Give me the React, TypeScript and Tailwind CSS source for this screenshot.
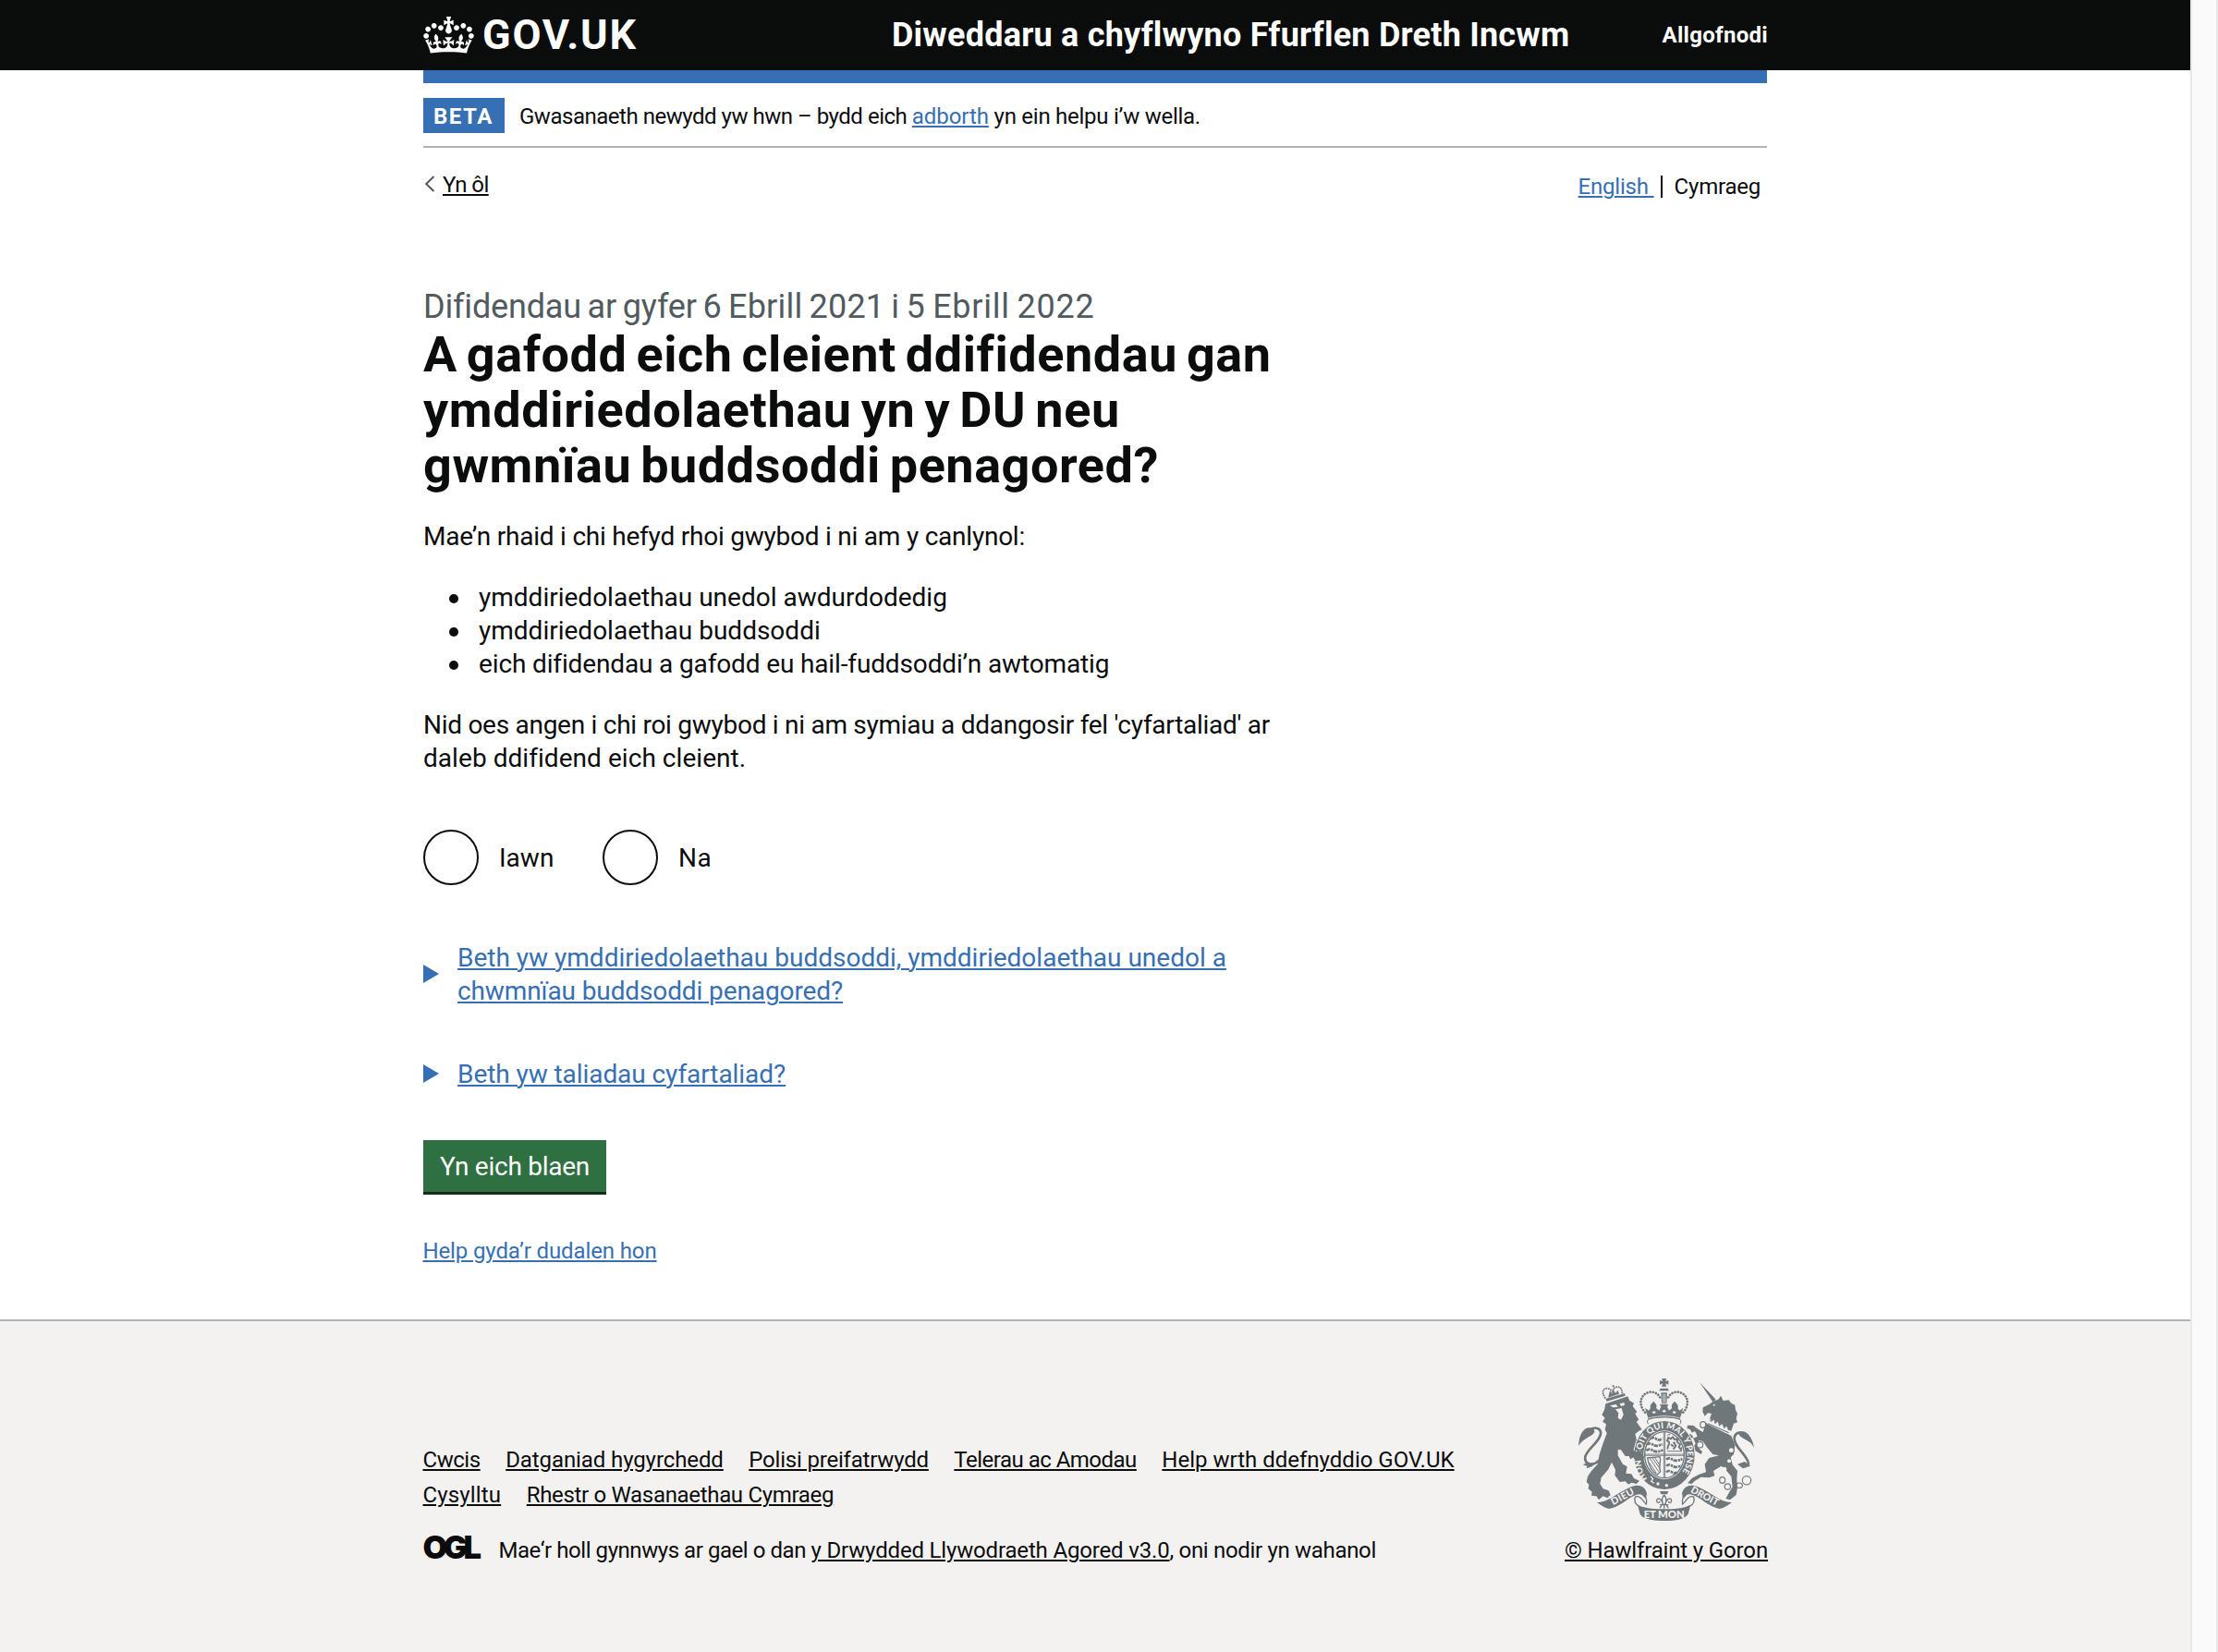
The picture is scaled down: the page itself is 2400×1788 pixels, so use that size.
import type { ReactNode } from "react";

const footerRowOne = [
  { label: "Cwcis", cls: "tracking-[-0.45px]" },
  { label: "Datganiad hygyrchedd", cls: "tracking-[-0.1px]" },
  { label: "Polisi preifatrwydd", cls: "tracking-[-0.2px]" },
  { label: "Telerau ac Amodau", cls: "tracking-[-0.51px]" },
  { label: "Help wrth ddefnyddio GOV.UK", cls: "" },
];

const footerRowTwo = [
  { label: "Cysylltu", cls: "tracking-[0.15px]" },
  { label: "Rhestr o Wasanaethau Cymraeg", cls: "tracking-[-0.32px]" },
];

const bullets = [
  { label: "ymddiriedolaethau unedol awdurdodedig", cls: "" },
  { label: "ymddiriedolaethau buddsoddi", cls: "" },
  { label: "eich difidendau a gafodd eu hail-fuddsoddi’n awtomatig", cls: "tracking-[-0.14px]" },
];

function Link({ children, className = "" }: { children: ReactNode; className?: string }) {
  return (
    <a href="#" className={`underline decoration-2 underline-offset-2 ${className}`}>
      {children}
    </a>
  );
}

function Crown() {
  return (
    <svg viewBox="0 0 132 97" className="h-[40px] w-[55px] shrink-0" fill="currentColor" aria-hidden="true">
      <path d="M25 30.2c3.5 1.5 7.7-.2 9.1-3.7 1.5-3.6-.2-7.8-3.9-9.2-3.6-1.4-7.6.3-9.1 3.9-1.4 3.5.3 7.5 3.9 9zM9 39.5c3.6 1.5 7.8-.2 9.2-3.7 1.5-3.6-.2-7.8-3.9-9.1-3.6-1.5-7.6.2-9.1 3.8-1.4 3.5.3 7.5 3.8 9zM4.4 57.2c3.5 1.5 7.7-.2 9.1-3.8 1.5-3.6-.2-7.7-3.9-9.1-3.5-1.5-7.6.3-9.1 3.8-1.4 3.5.3 7.6 3.9 9.1zm38.3-21.4c3.5 1.5 7.7-.2 9.1-3.8 1.5-3.6-.2-7.7-3.9-9.1-3.6-1.5-7.6.3-9.1 3.8-1.3 3.6.4 7.7 3.9 9.1zm64.4-5.6c-3.6 1.5-7.8-.2-9.1-3.7-1.5-3.6.2-7.8 3.8-9.2 3.6-1.4 7.7.3 9.2 3.9 1.3 3.5-.4 7.5-3.9 9zm15.9 9.3c-3.6 1.5-7.7-.2-9.1-3.7-1.5-3.6.2-7.8 3.7-9.1 3.6-1.5 7.7.2 9.2 3.8 1.5 3.5-.3 7.5-3.8 9zm4.7 17.7c-3.6 1.5-7.8-.2-9.2-3.8-1.5-3.6.2-7.7 3.9-9.1 3.6-1.5 7.7.3 9.2 3.8 1.3 3.5-.4 7.6-3.9 9.1zM89.3 35.8c-3.6 1.5-7.8-.2-9.2-3.8-1.4-3.6.2-7.7 3.9-9.1 3.6-1.5 7.7.3 9.2 3.8 1.4 3.6-.3 7.7-3.9 9.1zM69.7 17.7l8.9 4.7V9.3l-8.9 2.8c-.2-.3-.5-.6-.9-.9L72.4 0H59.6l3.5 11.2c-.3.3-.6.5-.9.9l-8.8-2.8v13.1l8.8-4.7c.3.3.6.7.9.9l-5 15.4v.1c-.2.8-.4 1.6-.4 2.4 0 4.1 3.1 7.5 7 8.1h.2c.3 0 .7.1 1 .1.4 0 .7 0 1-.1h.2c4-.6 7.1-4.1 7.1-8.1 0-.8-.1-1.7-.4-2.4V34l-5.1-15.4c.4-.2.7-.6 1-.9zM66 92.8c16.9 0 32.8 1.1 47.1 3.2 4-16.9 8.9-26.7 14-33.5l-9.6-3.4c1 4.9 1.1 7.2 0 10.2-1.5-1.4-3-4.3-4.2-8.7L108.6 76c2.8-2 5-3.2 7.5-3.3-4.4 9.4-10 11.9-13.6 11.2-4.3-.8-6.3-4.6-5.6-7.9 1-4.7 5.7-5.9 8-.5 4.3-8.7-3-11.4-7.6-8.8 7.1-7.2 7.9-13.5 2.1-21.1-8 6.1-8.1 12.3-4.5 20.8-4.7-5.4-12.1-2.5-9.5 6.2 3.4-5.2 7.9-2 7.2 3.1-.6 4.3-6.4 7.8-13.5 7.2-10.3-.9-10.9-8-11.2-13.8 2.5-.5 7.1 1.8 11 7.3L80.2 60c-4.1 4.4-8 5.3-12.3 5.4 1.4-4.4 8-11.6 8-11.6H55.5s6.4 7.2 7.9 11.6c-4.2-.1-8-1-12.3-5.4l1.4 16.4c3.9-5.5 8.5-7.7 10.9-7.3-.3 5.8-.9 12.8-11.1 13.8-7.2.6-12.9-2.9-13.5-7.2-.7-5 3.8-8.3 7.1-3.1 2.7-8.7-4.6-11.6-9.4-6.2 3.7-8.5 3.6-14.7-4.6-20.8-5.8 7.6-5 13.9 2.2 21.1-4.7-2.6-11.9.1-7.7 8.8 2.3-5.5 7.1-4.2 8.1.5.7 3.3-1.3 7.1-5.7 7.9-3.5.7-9-1.8-13.5-11.2 2.5.1 4.7 1.3 7.5 3.3l-4.7-15.4c-1.2 4.4-2.7 7.2-4.3 8.7-1.1-3-.9-5.3 0-10.2l-9.5 3.4c5 6.9 9.9 16.7 14 33.5 14.8-2.1 30.8-3.2 47.7-3.2z" />
    </svg>
  );
}

function RoyalArms() {
  const ink = "#6f777b";
  const paper = "#f3f2f1";
  return (
    <svg viewBox="84 66 570 462" className="h-[154px] w-[190px]" fill={ink} aria-hidden="true">
      {/* lion's tail and body */}
      <path d="M150 332C132 352 102 346 106 320C112 294 152 274 156 246C158 226 138 222 122 232" fill="none" stroke={ink} strokeWidth="8" />
      <path d="M84 284C86 262 90 240 108 228C120 222 138 228 136 240C130 254 104 256 84 284zM112 340L98 346L112 350L110 358L132 350z" />
      <path d="M172 148L244 124L250 138L264 146L260 156L274 174L268 180L280 200L272 206L290 232L280 236L268 246L272 262L276 280L292 300L290 304L298 322L288 334L278 326L270 336L264 322L252 328L248 318L236 318L222 298L212 296L212 316L228 344L242 352L238 374L256 376L264 390L282 398L272 408L256 404L246 410L236 400L218 402L202 380L204 362L192 338L180 362L158 388L154 408L164 424L182 430L188 444L178 454L164 448L150 460L142 448L126 446L128 434L116 424L118 410L110 402L114 384L126 366L146 344L152 312L164 276L176 244L170 232L174 214L162 206L170 194L160 184L168 168z" />
      <path d="M186 154L206 150L212 158L196 160zM218 148L232 144L234 152L222 156zM204 166L224 162L230 184L222 200L212 194L214 178z" fill={paper} />
      <path d="M176 140L236 122L234 114L172 132z" />
      <path d="M170 128C158 110 164 98 176 98C186 98 192 106 196 112M226 112C224 94 216 92 206 94C198 96 194 104 196 112" fill="none" stroke={ink} strokeWidth="6" strokeDasharray="0.1 7.4" strokeLinecap="round" />
      <path d="M194 88h6v6h-6zM186 106l8 10 4-14 6 12 8-10 4 12-36 12z" />

      {/* unicorn's tail and body */}
      <path d="M636 346C638 318 588 290 590 260C592 238 616 236 630 252" fill="none" stroke={ink} strokeWidth="8" />
      <path d="M654 290C650 268 640 244 620 238C608 236 602 240 606 250C618 266 640 264 654 290zM624 336L642 350L618 358L600 344z" />
      <path d="M477 78L530 134L520 142z" />
      <path d="M487 174L488 160L512 148L520 140L538 134L546 122L554 138L572 136L580 146L592 152L594 168L600 180L596 196L600 208L588 212L580 236L544 224L508 202L516 180L504 178L494 188z" />
      <circle cx="524" cy="152" r="3" fill={paper} />
      <path d="M498 210L544 234L580 252L592 282L588 312L578 322L584 346L600 366L598 394L600 420L596 444L576 460L562 456L574 434L584 418L580 384L562 362L548 350L522 366L526 382L508 388L482 386L462 398L452 408L438 406L452 390L474 378L498 370L494 344L508 324L540 316L520 312L500 288L488 270L474 266L474 292L486 304L482 312L462 300L456 292L464 276L456 260L470 254L464 240L450 232L436 228L438 218L456 218L474 232L488 240z" />
      <path d="M506 202l6-6 4 10 8-6 4 12 8-6 6 14 8-6 6 12 10-4 4 14-6 8-62-30z" fill={paper} />
      <path d="M504 212L572 242M512 200l2 6M526 206l2 6M540 214l2 6M556 222l2 6" stroke={ink} strokeWidth="3.5" fill="none" />
      <path d="M446 222L456 240M454 258L444 248" stroke={ink} strokeWidth="8" fill="none" />
      <g fill="none" stroke={ink} strokeWidth="3.5">
        <ellipse cx="488" cy="216" rx="9" ry="10" fill={paper} />
        <circle cx="478" cy="281" r="10" fill={paper} />
        <circle cx="580" cy="299" r="9" fill={paper} />
        <ellipse cx="551" cy="396" rx="9" ry="10" />
        <circle cx="568" cy="417" r="9.5" />
        <ellipse cx="606" cy="413" rx="10" ry="8" />
        <circle cx="630" cy="397" r="14" />
      </g>
      <circle cx="573" cy="334" r="6" fill={paper} />
      <circle cx="558" cy="360" r="7" fill={paper} />

      {/* garter */}
      <ellipse cx="363" cy="315" rx="101" ry="114" fill={paper} />
      <ellipse cx="363" cy="315" rx="98" ry="111" />
      <ellipse cx="363" cy="314" rx="68" ry="79" fill={paper} />
      <path id="garter-text" d="M307 392A74 86 0 0 1 289 314A74 86 0 0 1 437 314A74 86 0 0 1 394 393" fill="none" />
      <text fill={paper} fontFamily="Lato" fontWeight="900" fontSize="28">
        <textPath href="#garter-text" textLength="392" lengthAdjust="spacing">HONI SOIT QUI MAL Y PENSE</textPath>
      </text>
      <path d="M318 384l8 8-6 8 10 6" stroke={paper} strokeWidth="3.5" fill="none" />
      <circle cx="342" cy="408" r="5" fill={paper} />
      <circle cx="370" cy="413" r="5" fill={paper} />

      {/* shield */}
      <ellipse cx="363" cy="314" rx="64" ry="75" fill="none" stroke={ink} strokeWidth="4" />
      <path d="M361 238V390M365 238V390M299 312H427M299 316H427" stroke={ink} strokeWidth="2.6" />
      <g fill="none" stroke={ink} strokeWidth="8" strokeDasharray="13 3 7 2">
        <path d="M318 262q8-8 18 0t20-2M306 281q8-8 20 0t30-2M304 300q10-8 22 0t32-2" />
        <path d="M369 329q8-8 20 0t32-2M369 350q8-8 20 0t28-2M369 370q8-8 18 0t18-2" />
      </g>
      <path d="M374 296C370 284 382 280 378 272L372 268L376 258L384 262L390 256L396 264L406 262L404 272L414 280L410 288L418 298M392 272L400 284L392 296M384 280L392 286" fill="none" stroke={ink} strokeWidth="6" />
      <path d="M372 302h48M372 250l10-3M418 288v12" stroke={ink} strokeWidth="3" />
      <path d="M308 324L348 320C354 334 342 350 350 368L340 378C320 368 312 350 308 324z" fill="none" stroke={ink} strokeWidth="4" />
      <path d="M316 326L344 368M324 324L348 358M332 323L347 346M313 338L336 372" stroke={ink} strokeWidth="3" />

      {/* lion's paw over the garter */}
      <path d="M256 296L272 304L284 300L292 304L288 310L298 322L288 334L280 326L272 336L262 322L256 316z" />

      {/* crown */}
      <path d="M354 66h16l-4 9 10-3v14l-10-4 4 10h-16l4-10-10 4V72l10 3zM350 98h24l4 8h-32zM352 112h20l-2 36h-16z" />
      <path d="M359 116v30M365 116v30" stroke={paper} strokeWidth="2.5" />
      <path d="M300 176C278 152 282 116 316 110C334 108 344 118 350 130" fill="none" stroke={ink} strokeWidth="8" strokeDasharray="0.1 9.4" strokeLinecap="round" />
      <path d="M424 176C446 152 442 116 408 110C390 108 380 118 374 130" fill="none" stroke={ink} strokeWidth="8" strokeDasharray="0.1 9.4" strokeLinecap="round" />
      <path d="M300 162L312 170L318 162C314 154 320 148 328 140C336 148 340 154 336 162L346 170L352 158L348 150H376L372 158L378 170L388 162C384 154 388 148 396 140C404 148 410 154 406 162L412 170L424 162L414 194C390 184 336 184 310 194z" />
      <path d="M322 176l7-5 7 5-7 4zM355 172l7-5 7 5-7 4zM388 176l7-5 7 5-7 4z" fill={paper} />
      <path d="M310 199C336 189 390 189 414 199" fill="none" stroke={ink} strokeWidth="5" />
      <path d="M310 207C336 196 390 196 414 207" fill="none" stroke={paper} strokeWidth="10" />
      <path d="M309 200q-4 8 2 14M415 200q4 8-2 14" stroke={ink} strokeWidth="3" fill="none" />

      {/* motto scrolls */}
      <path d="M144 468C178 470 212 436 254 418C276 408 300 412 306 440L300 456C292 440 280 438 262 448C236 462 214 484 184 489C168 486 156 478 144 468z" />
      <path d="M582 468C546 470 514 436 472 418C450 408 426 412 420 440L426 456C434 440 444 438 464 448C490 462 512 484 542 489C558 486 570 478 582 468z" />
      <path d="M276 476C300 488 330 490 362 490C394 490 424 488 448 476L440 506C430 522 400 528 362 528C324 528 292 522 284 506z" />
      <path d="M268 450C264 464 268 474 280 480M268 450C286 444 294 466 304 474C308 460 300 452 302 440" fill="none" stroke={ink} strokeWidth="4" />
      <path d="M458 450C462 464 458 474 446 480M458 450C440 444 432 466 422 474C418 460 426 452 424 440" fill="none" stroke={ink} strokeWidth="4" />
      <g fill={paper} fontFamily="Lato" fontWeight="900" textAnchor="middle">
        <text x="228" y="460" fontSize="32" textLength="80" transform="rotate(-28 228 452)">DIEU</text>
        <text x="493" y="458" fontSize="31" textLength="98" transform="rotate(28 493 450)">DROIT</text>
        <text x="362" y="520" fontSize="34" textLength="132">ET MON</text>
      </g>
      <path d="M348 432h28l-4 10h-20z" />
      <path d="M362 444C352 456 354 466 360 476M362 444C372 456 370 466 364 476M358 474C354 454 338 450 338 464C340 472 348 470 348 464M366 474C370 454 386 450 386 464C384 472 376 470 376 464M348 476h28M362 478v10M354 478l-6 8M370 478l6 8" fill="none" stroke={ink} strokeWidth="4" />
    </svg>
  );
}

function Details({ children }: { children: ReactNode }) {
  return (
    <div className="flex items-center text-[28px] leading-9 text-[#366fb4]">
      <svg viewBox="0 0 17 20" className="h-5 w-[17px] shrink-0" fill="currentColor" aria-hidden="true">
        <path d="M0 0L17 10L0 20z" />
      </svg>
      <div className="-mb-px ml-5 pt-px">{children}</div>
    </div>
  );
}

function Radio({ label, className = "" }: { label: string; className?: string }) {
  return (
    <label className={`flex items-center text-[28px] leading-9 ${className}`}>
      <span className="size-[60px] rounded-full border-2 border-[#0b0c0c] bg-white" />
      <span className="ml-[22px] pt-0.5">{label}</span>
    </label>
  );
}

export default function App() {
  return (
    <div className="flex h-[1788px] w-[2400px] overflow-hidden bg-white font-['Roboto',sans-serif] text-[#0b0c0c]">
      <div className="flex w-[2370px] flex-col">
        <header className="bg-[#0b0c0c] text-white">
          <div className="mx-auto flex h-[76px] w-[1454px] items-center font-bold">
            <div className="flex w-[507px] items-center">
              <Crown />
              <span className="ml-[9px] pb-px text-[45px] leading-[60px] tracking-[1.8px]">GOV.UK</span>
            </div>
            <div className="text-[36px] leading-[48px] tracking-[0.22px] whitespace-nowrap">
              Diweddaru a chyflwyno Ffurflen Dreth Incwm
            </div>
            <div className="-mr-px ml-auto text-[24px] leading-9 tracking-[0.3px]">Allgofnodi</div>
          </div>
        </header>

        <div className="mx-auto flex w-[1454px] flex-col">
          <div className="h-[14px] bg-[#366fb4]" />
          <div className="flex h-[70px] border-b-2 border-[#b2b2b2] pt-4 text-[24px] leading-10">
            <strong className="h-[38px] w-[88px] bg-[#366fb4] pl-[11px] font-bold tracking-[1.5px] text-white">BETA</strong>
            <p className="ml-4 tracking-[-0.48px]">
              Gwasanaeth newydd yw hwn – bydd eich <Link className="tracking-[-0.07px] text-[#366fb4]">adborth</Link>
              <span className="tracking-[-0.26px]"> yn ein helpu i’w wella.</span>
            </p>
          </div>

          <div className="flex h-[150px] items-start pt-[22px] text-[24px] leading-9">
            <div className="flex items-center">
              <svg viewBox="0 0 12 18" className="mb-[3px] ml-px h-[18px] w-3" fill="none" stroke="#505a5f" strokeWidth="2" aria-hidden="true">
                <path d="M10.5 1L2.2 9L10.5 17" />
              </svg>
              <Link className="ml-2 tracking-[-0.6px]">Yn ôl</Link>
            </div>
            <div className="ml-auto flex items-center pt-0.5 pr-[7px]">
              <Link className="tracking-[-0.2px] whitespace-pre text-[#366fb4]">{"English "}</Link>
              <span className="ml-[7px] h-6 w-0.5 bg-[#0b0c0c]" />
              <span className="ml-[13px] tracking-[-0.22px]">Cymraeg</span>
            </div>
          </div>

          <main className="flex flex-col items-start">
            <h1>
              <span className="block text-[36px] leading-[44px] text-[#505a5f] [word-spacing:-2px]">
                <span className="tracking-[-0.18px]">Difidendau ar gyfer </span>
                <span className="tracking-[0.2px]">6 Ebrill 2021 i </span>
                <span className="tracking-[0.75px]">5 Ebrill 2022</span>
              </span>
              <span className="block text-[54px] leading-[60px] font-bold whitespace-nowrap [word-spacing:-4px]">
                <span className="tracking-[0.55px]">A gafodd eich cleient ddifidendau gan</span>
                <br />
                <span className="tracking-[0.62px]">ymddiriedolaethau yn y DU neu</span>
                <br />
                <span className="tracking-[0.54px]">gwmnïau buddsoddi penagored?</span>
              </span>
            </h1>

            <div className="text-[28px] leading-9 whitespace-nowrap">
              <p className="mt-[29px] tracking-[-0.23px]">Mae’n rhaid i chi hefyd rhoi gwybod i ni am y canlynol:</p>
              <ul className="mt-[30px] pl-7">
                {bullets.map((b) => (
                  <li key={b.label} className={`flex items-center ${b.cls}`}>
                    <span className="mt-px mr-[22px] size-2.5 rounded-full bg-[#0b0c0c]" />
                    {b.label}
                  </li>
                ))}
              </ul>
              <p className="mt-[30px]">
                <span className="tracking-[-0.275px]">
                  Nid oes angen i chi roi gwybod i ni am symiau a ddangosir fel 'cyfartaliad' ar
                </span>
                <br />
                <span className="tracking-[0.05px]">daleb ddifidend eich cleient.</span>
              </p>
            </div>

            <div className="mt-[59px] flex">
              <Radio label="Iawn" className="w-[194px]" />
              <Radio label="Na" className="tracking-[0.6px]" />
            </div>

            <div className="mt-[60px]">
              <Details>
                <Link>
                  Beth yw ymddiriedolaethau buddsoddi, ymddiriedolaethau unedol a
                  <br />
                  <span className="tracking-[-0.11px]">chwmnïau buddsoddi penagored?</span>
                </Link>
              </Details>
            </div>
            <div className="mt-[54px]">
              <Details>
                <Link className="tracking-[-0.07px]">Beth yw taliadau cyfartaliad?</Link>
              </Details>
            </div>

            <button className="mt-[54px] h-[59px] w-[198px] border-b-3 border-[#122d1c] bg-[#2f7042] pt-px text-center text-[28px] leading-[55px] tracking-[-0.26px] text-white">
              Yn eich blaen
            </button>

            <div className="mt-[43px] -ml-[0.5px] text-[24px] leading-9 text-[#366fb4]">
              <Link className="tracking-[-0.12px]">Help gyda’r dudalen hon</Link>
            </div>
          </main>
        </div>

        <footer className="mt-14 flex-1 border-t-2 border-[#b2b2b2] bg-[#f3f2f1] text-[24px]">
          <div className="mx-auto flex w-[1454px] justify-between">
            <div className="-ml-[0.5px] pt-[131px]">
              <div className="flex gap-[27.5px] leading-[38px]">
                {footerRowOne.map((l) => (
                  <Link key={l.label} className={l.cls}>{l.label}</Link>
                ))}
              </div>
              <div className="flex gap-[27.5px] leading-[38px]">
                {footerRowTwo.map((l) => (
                  <Link key={l.label} className={l.cls}>{l.label}</Link>
                ))}
              </div>
              <div className="mt-[23px] flex items-start leading-9">
                <svg viewBox="-4 -10 72 46" className="-mt-2.5 -ml-1 h-[46px] w-[72px] shrink-0" aria-hidden="true">
                  <text x="-0.5" y="26.9" fontFamily="Inter" fontWeight="900" fontSize="34.5" textLength="63.5" fill="#0b0c0c">OGL</text>
                </svg>
                <p className="ml-[14px]">
                  <span className="tracking-[-0.445px]">Mae‘r holl gynnwys ar gael o dan </span>
                  <Link className="tracking-[-0.166px]">y Drwydded Llywodraeth Agored v3.0</Link>
                  <span className="tracking-[-0.32px]">, oni nodir yn wahanol</span>
                </p>
              </div>
            </div>
            <div className="-mr-px flex w-[220px] flex-col items-center pt-[62px]">
              <RoyalArms />
              <Link className="mt-[14px] leading-9 tracking-[-0.15px] whitespace-nowrap">© Hawlfraint y Goron</Link>
            </div>
          </div>
        </footer>
      </div>
      <div className="flex-1 border-x-2 border-[#e8e8e8] bg-[#fafafa]" />
    </div>
  );
}
